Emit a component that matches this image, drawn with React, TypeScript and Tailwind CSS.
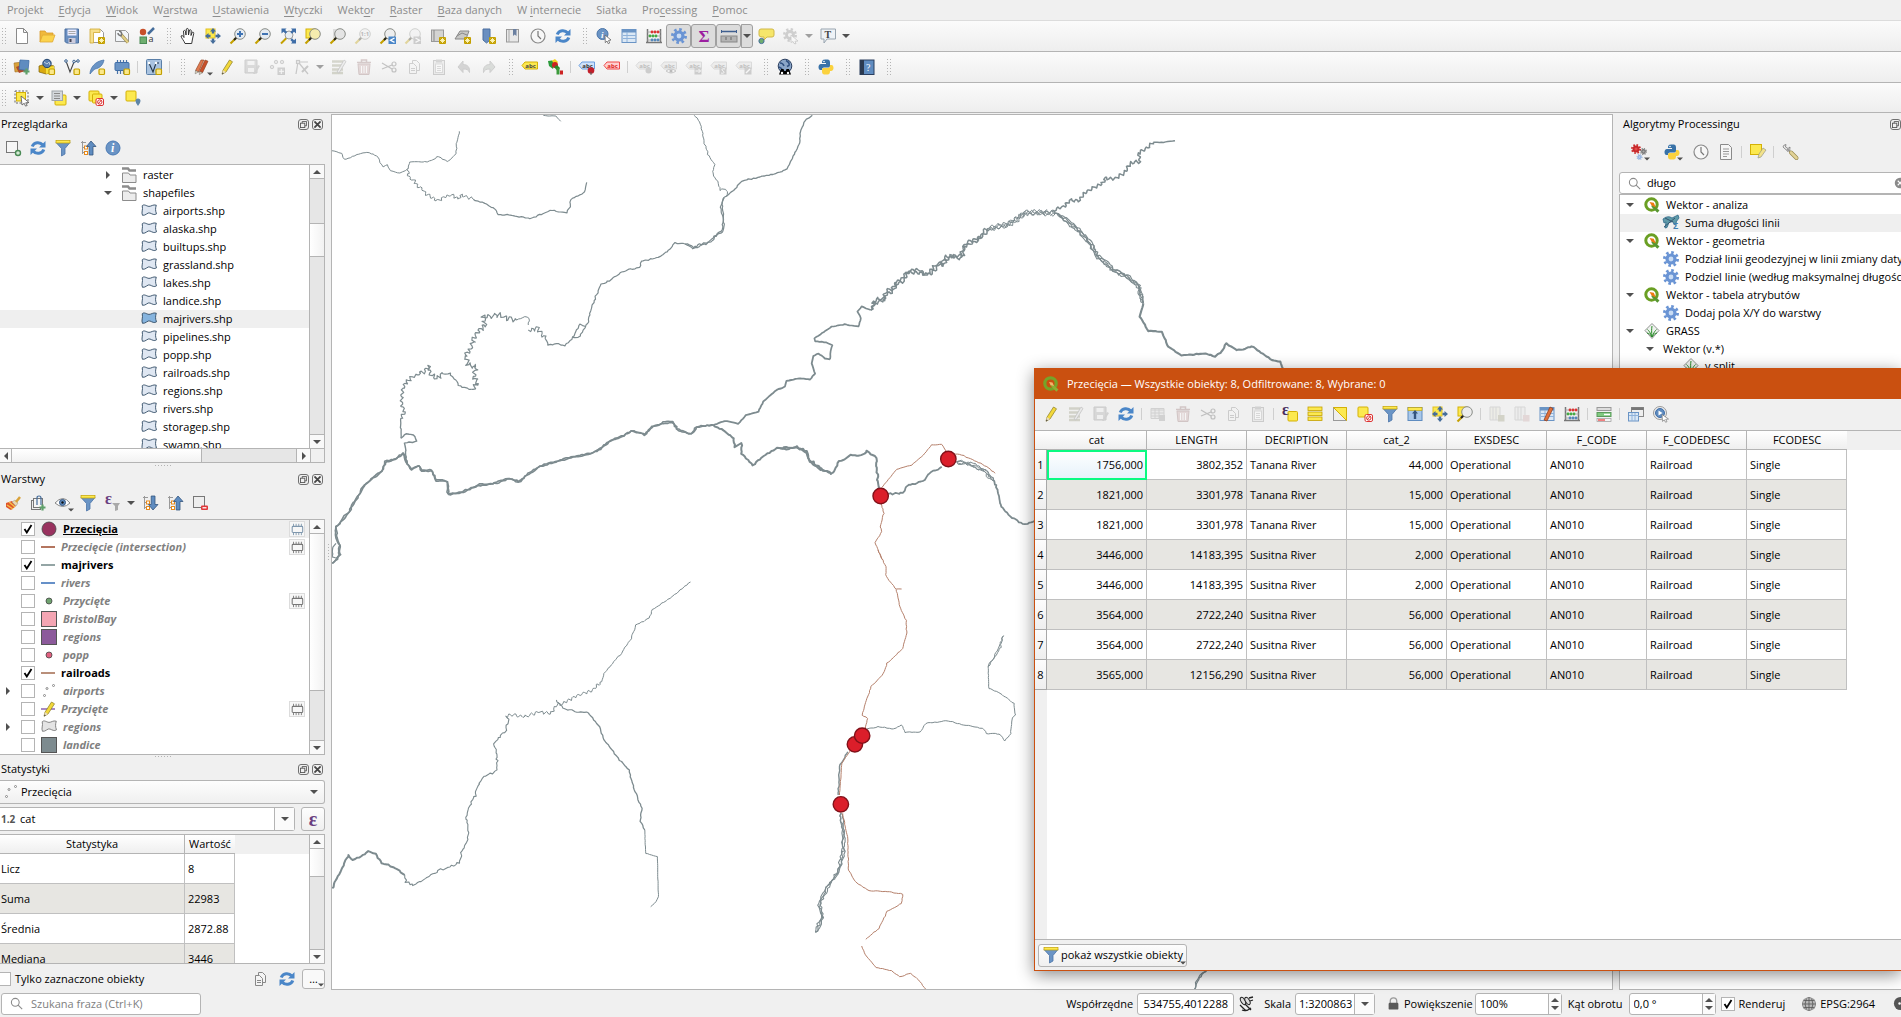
import type { ReactNode } from 'react';

/* ---------- icon drawings (16 x 16 box) ---------- */

const starBadge = (
  <g>
    <rect x="9" y="9" width="7" height="7" rx="1" fill="#c4a000" />
    <path d="M12.5 10v5M10 12.5h5M10.8 10.8l3.4 3.4M14.2 10.8l-3.4 3.4" stroke="#fff8c0" strokeWidth="0.9" />
  </g>
);
const squareBadge = <rect x="10" y="10" width="5.5" height="5.5" rx="1" fill="#fbe88a" stroke="#c4a000" strokeWidth="1.2" />;
const lens = (fill: string) => (
  <g>
    <path d="M.5 15.5l6-6" stroke="#c4a000" strokeWidth="2.2" />
    <path d="M4 12l3-3" stroke="#222" strokeWidth="2" />
    <circle cx="10" cy="6" r="5.300" fill={fill} stroke="#8a8d88" strokeWidth="1" />
  </g>
);
const refreshShape = (
  <g fill="none" stroke="#4a86c8" strokeWidth="3">
    <path d="M2.2 6.5C4 1.8 10 1.6 12.6 4.8" />
    <path d="M13.8 9.5C12 14.2 6 14.4 3.4 11.2" />
    <path d="M15.5 1v6.5H9z" fill="#4a86c8" stroke="none" />
    <path d="M.5 15V8.500H7z" fill="#4a86c8" stroke="none" />
  </g>
);
const gearShape = (x: number, y: number, r: number, fill: string, hub: string) => (
  <g>
    <circle cx={x} cy={y} r={r * 0.82} fill="none" stroke={fill} strokeWidth={r * 0.36} strokeDasharray={`${r * 0.32} ${r * 0.324}`} />
    <circle cx={x} cy={y} r={r * 0.5} fill={hub} stroke={fill} strokeWidth={r * 0.4} />
  </g>
);
const pencilShape = (fill: string) => (
  <g>
    <path d="M3 15.200l1-4L10.500 1l3 1.800L7 13z" fill={fill} stroke="#8a7a20" strokeWidth="0.7" />
    <path d="M3 15.200l1-4 3 1.800z" fill="#e9dcc0" />
    <path d="M3 15.400l.5-2 1.300.9z" fill="#333" />
  </g>
);
const arrowsShape = (c: string) => (
  <path d="M8 0l3 3.500H9.200v2H6.800v-2H5zM8 16l3-3.500H9.200v-2H6.800v2H5zM0 8l3.500-3v1.800h2v2.400h-2V11zM16 8l-3.500-3v1.800h-2v2.400h2V11z" fill={c} />
);
const tag = (fill: string, stroke: string, color: string) => (
  <g>
    <path d="M0 6.500l3-3.500h12.500v7H3z" fill={fill} stroke={stroke} />
    <text x="3.300" y="8.800" fontSize="6" fontWeight="700" fill={color} fontFamily="Open Sans, sans-serif">abc</text>
  </g>
);
const yellowSquare = <rect x="1" y="1" width="10" height="10" rx="1" fill="#fce94f" stroke="#d4b106" />;
const treeShape = (
  <g>
    <path d="M2.500 1v13M1 2.500h5M2.500 7.500h3M2.500 12.500h3" stroke="#999" fill="none" />
    <rect x="4.500" y="6" width="3" height="3" fill="#fff" stroke="#e88a1a" />
    <rect x="4.500" y="11.500" width="3" height="3" fill="#fff" stroke="#e88a1a" />
  </g>
);
const tableShape = (
  <g>
    <rect x="1" y="1.500" width="14" height="13" fill="#dbe8f5" stroke="#6a94c5" />
    <rect x="1" y="1.500" width="14" height="3" fill="#6a94c5" />
    <path d="M6 4v10M2 7.500h13M2 10.500h13" stroke="#8fb2da" />
  </g>
);
const copyShape = (
  <g fill="#f4f4f4" stroke="#888">
    <path d="M6.500 1.500h4l3 3v7h-7z" />
    <path d="M3.500 4.500h4l3 3v7h-7z" />
    <path d="M5 9.500h4M5 11.500h4" />
  </g>
);
const abacus = (
  <g>
    <path d="M1.500 1v14M14.500 1v14M0 14.500h16" stroke="#777" strokeWidth="1.500" />
    <path d="M1 4h14M1 8h14M1 12h14" stroke="#999" strokeWidth="0.8" />
    <g fill="#d33">{[6, 9, 12].map((x) => <circle key={x} cx={x} cy="4" r="1.400" />)}</g>
    <g fill="#4a4">{[4, 7, 10].map((x) => <circle key={x} cx={x} cy="8" r="1.400" />)}</g>
    <g fill="#58b">{[6, 9, 12].map((x) => <circle key={x} cx={x} cy="12" r="1.400" />)}</g>
  </g>
);
const forbidden = (
  <g>
    <rect x="8" y="8.500" width="7.500" height="7" rx="1.500" fill="#fff" stroke="#d33" />
    <circle cx="11.800" cy="12" r="2.200" fill="none" stroke="#d33" />
    <path d="M10 14l3.500-4" stroke="#d33" />
  </g>
);
const grassShape = (
  <g>
    <path d="M8 .500l7 7-7 8-7-8z" fill="#eef2ee" stroke="#777" strokeWidth="0.8" />
    <path d="M8 14C7.500 9 7.500 6 8 3M8 14C6 9 5 8 3.500 6.500M8 14c2-5 3-6 4.500-7.500M8 14C6 11 5 10.500 3 10M8 14c2-3 3-3.500 5-4" stroke="#2a8a2a" fill="none" />
  </g>
);
const qgisShape = (
  <g>
    <circle cx="7.500" cy="7.500" r="5.700" fill="#fff" stroke="#6a9f23" strokeWidth="3" />
    <path d="M8 6.500l1.800-.3L9.600 8l5.900 5.500-2.200 2.300L7.500 9.800z" fill="#589632" />
    <path d="M5.500 5l4.300.8 2 4.600-4.200-1.800z" fill="#ee7913" />
  </g>
);
const titleLogo = (
  <g>
    <circle cx="7.500" cy="7.500" r="5.700" fill="none" stroke="#76a32a" strokeWidth="3.200" />
    <path d="M8 7l7.500 6.500-2.200 2.300L7 9z" fill="#8fae35" />
    <path d="M6 6l3.500.5 1.500 3.600-3.500-1z" fill="#f6b26b" />
  </g>
);
const polyShape = (fill: string, stroke: string) => (
  <path d="M1.200 2.800C3 .600 5.500 3.200 8 3.400 10.500 3.400 12 1.200 15.300 2.200 14.400 5 14.200 7.500 15.500 10.800c-2.300 1.600-4.200.2-6.500-.8C6.500 9 5 12.800 1.500 12.300 0 9.500 2.300 6.500 1.200 2.800z" fill={fill} stroke={stroke} strokeWidth="0.9" />
);

const glyphs: Record<string, ReactNode> = {
  newFile: <path d="M2.500.500h7l4 4v11h-11zM9.500.500v4h4" fill="#fff" stroke="#8a8a8a" />,
  open: <g><path d="M1 14V3h5l1.500 2H14v3" fill="#f0b93c" stroke="#d9992a" strokeWidth="0.8" /><path d="M3.500 7H16l-2.500 7H1z" fill="#fbd34e" stroke="#e0a832" strokeWidth="0.8" /></g>,
  save: <g><path d="M1 1h13.500v14H2.500L1 13.500z" fill="#6a8fc0" stroke="#4a6f9f" /><rect x="3.500" y="1.500" width="9" height="6" fill="#eef" /><path d="M4.500 3.500h7M4.500 5.500h7" stroke="#aaa" /><rect x="4.500" y="10" width="7" height="5" fill="#ccd" /><rect x="5.500" y="11" width="2" height="3" fill="#445" /></g>,
  layoutNew: <g><path d="M1.500 1.500h10l3 3v10h-13z" fill="#fff" stroke="#999" /><path d="M1 1h10v3.500H4.500V15H1z" fill="#f6df8a" stroke="#d0a830" strokeWidth="0.8" />{starBadge}</g>,
  layoutMgr: <g><path d="M1.500 2.500h10l3 3v8h-13z" fill="#f2f5f8" stroke="#999" /><path d="M7 6.500l7 8" stroke="#8a7a40" strokeWidth="3.200" /><path d="M7 6.500l7 8" stroke="#e2cf86" strokeWidth="2" /><path d="M4 5c0 2 2 3 4 2.500M5 3c2 0 3 2 2.500 4" stroke="#777" fill="none" strokeWidth="1.500" /></g>,
  styles: <g><circle cx="4" cy="4" r="3.200" fill="#c8502a" /><path d="M9 6l6-6" stroke="#456d9b" strokeWidth="2.500" /><rect x="1" y="9" width="6.500" height="6.500" fill="#6fae6f" stroke="#4a8a55" /><text x="9.500" y="14" fontSize="9" fill="#333" fontFamily="Open Sans, sans-serif">a</text></g>,
  pan: <path d="M5 15.500c-1-3-3.500-5-4-7.500 1.200-1 2.200 0 3 1.500L3.500 3c1-1 1.800-.5 2 .5L6 7l.3-6c.8-.9 1.900-.6 2 .3L8.500 7l1-5c1-.8 1.800 0 1.700 1L11 7.500l1.200-3.200c1-.5 1.700.2 1.500 1.200L12.500 11l-.8 4.500z" fill="#fff" stroke="#222" strokeWidth="0.9" />,
  panSel: <g><rect x="1" y="1" width="9" height="9" fill="#fce94f" stroke="#e0c020" />{arrowsShape('#456d9b')}</g>,
  zoomIn: <g>{lens('#e4ebf2')}<path d="M10 3v6M7 6h6" stroke="#3f73b3" strokeWidth="2" /></g>,
  zoomOut: <g>{lens('#e4ebf2')}<path d="M7 6h6" stroke="#3f73b3" strokeWidth="2" /></g>,
  zoomFull: <g><path d="M1 15.500l6-6" stroke="#c4a000" strokeWidth="2" /><circle cx="9" cy="7" r="4" fill="#e8eef4" stroke="#999" /><path d="M1.500.500H6.500L5.200 2l2 2-1.700 1.700-2-2L1.500 5.500zM16 .500h-5L12.300 2l-2 2L12 5.700l2-2 2 1.800zM16 15.500h-5l1.300-1.500-2-2L12 10.300l2 2 2-1.800z" fill="#3f6ea8" /></g>,
  zoomSel: <g><rect x="1" y="1" width="9" height="9" fill="#fce94f" stroke="#d4b106" />{lens('#f6ecae')}</g>,
  zoomLayer: <g><rect x="3" y="1" width="8" height="9" fill="#ddd" />{lens('#e4e4e4')}</g>,
  tableZoom: <g><rect x="1" y="1" width="9" height="9" fill="#fce94f" stroke="#d4b106" />{lens('#ececec')}</g>,
  zoomNative: <g>{lens('#eee')}<text x="5.500" y="8.300" fontSize="6" fontWeight="700" fill="#444" fontFamily="Open Sans, sans-serif">1:1</text></g>,
  zoomLast: <g>{lens('#eee')}<rect x="8.500" y="8.500" width="7.500" height="7.500" fill="#4a86c8" /><path d="M14.500 10l-4 2.200 4 2.200" stroke="#fff" fill="none" strokeWidth="1.300" /></g>,
  zoomNext: <g>{lens('#eee')}<rect x="8.500" y="8.500" width="7.500" height="7.500" fill="#888" /><path d="M10.500 10l4 2.200-4 2.200" stroke="#fff" fill="none" strokeWidth="1.300" /></g>,
  mapNew: <g><rect x="1.500" y="2" width="12" height="11.500" fill="#d4d4d2" stroke="#999" /><path d="M4 2v11" stroke="#888" />{starBadge}</g>,
  map3d: <g><path d="M5 3h9l-3 8H0z" fill="#c8c8c6" stroke="#888" /><path d="M2 8l5-3 5 2" stroke="#888" fill="none" />{starBadge}</g>,
  bookmarkNew: <g><path d="M3 1h7v11l-3.500 3L3 12z" fill="#6a8fc0" stroke="#4a6f9f" />{starBadge}</g>,
  bookmarks: <g><rect x="1.500" y="1.500" width="12" height="12.500" fill="#e8e8e8" stroke="#999" /><path d="M4 2v12" stroke="#aaa" /><path d="M8 1h3.500v7L9.700 6.500 8 8z" fill="#6a7fa0" /></g>,
  clock: <g><circle cx="8" cy="8" r="7" fill="#f7f7f7" stroke="#8a8a8a" strokeWidth="1.200" /><path d="M8 3v5l3 3" fill="none" stroke="#777" strokeWidth="1.200" /></g>,
  refresh: refreshShape,
  identify: <g><circle cx="6.500" cy="6" r="5.500" fill="#6a94c5" stroke="#4a74a8" /><text x="5" y="9.500" fontSize="9" fontStyle="italic" fontWeight="700" fill="#fff" fontFamily="Liberation Serif, serif">i</text><path d="M9 7l6 5-2.500.5 1.200 2.500-1.500.7L11 13l-1.700 1.700z" fill="#fff" stroke="#666" strokeWidth="0.8" /></g>,
  table: tableShape,
  abacus,
  gear: gearShape(8, 8, 8, '#6a94d4', '#c9dcf4'),
  sigma: <text x="2.500" y="13.500" fontSize="17" fontWeight="700" fill="#9b1fa0" fontFamily="Liberation Serif, serif">Σ</text>,
  measure: <g><path d="M0 3.500h16" stroke="#3f5f8f" strokeWidth="1.500" /><path d="M.500 2v3M15.500 2v3" stroke="#3f5f8f" /><rect x="0" y="8" width="16" height="6" fill="#b4b4b4" stroke="#888" /><path d="M5 9v3M10 9v3" stroke="#666" /></g>,
  tip: <g><path d="M3 1h11q2 0 2 2v4q0 2-2 2H9l-3 3V9H4Q1 9 1 7V3q0-2 2-2z" fill="#f6e66a" stroke="#d0b848" /><circle cx="3.500" cy="13" r="2.600" fill="#6fae6f" stroke="#456d9b" /></g>,
  action: <g>{gearShape(7, 7, 7, '#888', '#eee')}<path d="M8 7l7 6-3 .3 1 2.500-2-.3-1-2-2 1z" fill="#fff" stroke="#777" strokeWidth="0.8" /></g>,
  textTip: <g><path d="M1 1h14.500v10H7l-3 4v-4H1z" fill="#eef2f6" stroke="#99a5b0" /><text x="4.500" y="9.500" fontSize="10" fontWeight="700" fill="#444" fontFamily="Liberation Serif, serif">T</text></g>,
  dataSource: <g><path d="M0 4l9-1 1 9-9 1z" fill="#d9a23a" stroke="#a06a20" strokeWidth="0.6" /><path d="M2 8l10-4 2 7-9 3z" fill="#b04a2a" /><path d="M6 1l9 .5-1 10-9-1z" fill="#5f8cc0" stroke="#3f6ea8" strokeWidth="0.8" /><path d="M12.500 9.500v6M9.500 12.500h6" stroke="#5fa06a" strokeWidth="2.200" /></g>,
  geopackage: <g><path d="M0 7l7-2 8 2v6l-8 2-7-2z" fill="#d9a910" stroke="#7a6008" strokeWidth="0.7" /><path d="M7 9v6l8-2V7z" fill="#f6de3a" /><circle cx="8" cy="4.500" r="4.200" fill="#5a7fb0" stroke="#23456f" /><path d="M5 3l3 2 2-2 1 3" stroke="#bcd" fill="none" />{squareBadge}</g>,
  vectorNew: <g><path d="M2 2l4 11L10 3l4-1" fill="none" stroke="#444" strokeWidth="1.100" /><circle cx="2" cy="2" r="1.300" fill="#ddd" stroke="#456d9b" /><circle cx="10" cy="2.500" r="1.300" fill="#ddd" stroke="#456d9b" /><circle cx="14" cy="2" r="1.300" fill="#ddd" stroke="#456d9b" />{squareBadge}</g>,
  feather: <g><path d="M1 15c0-6 5-13 14-14-1 5-4 8-9 9-2 1-3 3-5 5z" fill="#6a94c5" stroke="#3f6ea8" strokeWidth="0.7" />{squareBadge}</g>,
  chipBlue: <g><path d="M3.500 1v14M6.500 1v14M9.500 1v14M12.500 1v14" stroke="#4a74a8" strokeWidth="1.200" /><rect x="1" y="3.500" width="14" height="8" rx="1" fill="#6a94c5" stroke="#3f6ea8" />{squareBadge}</g>,
  virtual: <g><rect x="0.500" y="0.500" width="15" height="15" rx="1" fill="#a9c3e0" stroke="#5a7fa8" /><path d="M3 4l4 9 3-9h3" fill="none" stroke="#234" strokeWidth="1.100" /><circle cx="3" cy="4" r="1.200" fill="#fff" /><circle cx="10" cy="4" r="1.200" fill="#fff" />{squareBadge}</g>,
  pencils: <g><path d="M1.500 11.500L7 1h2.800L4.500 13z" fill="#e07a50" stroke="#8a3a1a" strokeWidth="0.600" /><path d="M5.500 12.500L11 1l3 1.200-5.500 11.500z" fill="#c8502a" stroke="#8a3a1a" strokeWidth="0.600" /><path d="M1.500 11.500l-.3 3.300L4.500 13zM5.500 12.500l-.2 3.200 3.200-2z" fill="#e9dcc0" stroke="#666" strokeWidth="0.500" /></g>,
  pencil: pencilShape('#f2d83a'),
  saveEdit: <g><path d="M1 1h12v13H1z" fill="#aaa" stroke="#888" /><rect x="3.500" y="2" width="7" height="4" fill="#eee" /><rect x="4" y="9" width="6" height="4" fill="#eee" /><path d="M9 15l5-9 2 1-5 8z" fill="#999" /></g>,
  addPoint: <g fill="#ccc" stroke="#888"><circle cx="3" cy="8" r="1.700" /><circle cx="7" cy="3" r="1.700" /><circle cx="13" cy="3" r="1.700" /><rect x="9" y="9" width="6.500" height="6.500" fill="#999" /><path d="M12.300 10v5M10 12.300h5" stroke="#fff" /></g>,
  vertex: <g fill="none" stroke="#777" strokeWidth="1.200"><path d="M2 15L4 3h10M5 4l9 11" /><rect x="2.500" y="1.500" width="3" height="3" fill="#ddd" /><path d="M8 13l6-6" strokeWidth="2" /></g>,
  multiEdit: <g><path d="M1 2.500h11M1 6.500h11M1 10.500h11M1 14h11" stroke="#999a80" strokeWidth="2.600" /><path d="M6 13L13 1l2 1.500L8 14z" fill="#ddd" stroke="#666" strokeWidth="0.7" /></g>,
  trash: <g><path d="M2 5h12l-1 10.500H3z" fill="#c9a9a9" stroke="#977" /><path d="M1 3.500h14M5.500 3V1h5v2" stroke="#977" fill="none" strokeWidth="1.500" /><path d="M5.500 7v7M8 7v7M10.500 7v7" stroke="#fff" /></g>,
  cut: <g fill="none" stroke="#666" strokeWidth="1.200"><path d="M1 4l10 6M1 10l10-4" /><circle cx="13" cy="11" r="2" /><circle cx="13" cy="5" r="2" /></g>,
  copy: copyShape,
  paste: <g><rect x="2.500" y="1.500" width="11" height="14" fill="#ddd" stroke="#888" /><rect x="5" y="0.500" width="6" height="3" fill="#999" /><rect x="4.500" y="5" width="7" height="8.500" fill="#fff" stroke="#aaa" /><path d="M6 7.500h4M6 9.500h4M6 11.500h4" stroke="#aaa" /></g>,
  undo: <path d="M7 2v3.500c5 0 7 3 6.500 8-1-3-3-3.500-6.500-3.500v3.500L2 8z" fill="#999" stroke="#888" />,
  redo: <path d="M9 2v3.500C4 5.500 2 8.500 2.500 13.500c1-3 3-3.500 6.500-3.500v3.500L14 8z" fill="#a9b0a9" stroke="#888" />,
  abcYellow: tag('#fce94f', '#d4b106', '#444'),
  diagram: <g><path d="M3.500 2.500L8 0l3 3-2.500 3z" fill="#f4d21f" /><path d="M1 2l4-.5 2 4-1 4.500-4-3z" fill="#2a9a3a" /><circle cx="8" cy="6" r="3" fill="#c22" /><path d="M7 8l3-2 3 3-2.500 3z" fill="#2a8a2a" /><rect x="9.500" y="9" width="3" height="6.500" fill="#3a9a3a" /><rect x="13" y="11.500" width="3" height="4" fill="#c22" /></g>,
  abcBlue: <g>{tag('#cfe2fa', '#6a9ee0', '#333')}<circle cx="12" cy="11.500" r="3.300" fill="#c21f2a" /><path d="M12 13v3" stroke="#555" /></g>,
  abcRed: tag('#ffd0d0', '#f04a4a', '#d22'),
  abcPin: <g>{tag('#ddd', '#aaa', '#555')}<circle cx="12.500" cy="11.500" r="3" fill="#888" /></g>,
  abcEye: <g>{tag('#ddd', '#aaa', '#555')}<path d="M5 12q5-4 10 0-5 4-10 0z" fill="#eee" stroke="#777" /><circle cx="10" cy="12" r="1.500" fill="#555" /></g>,
  abcMove: <g>{tag('#ddd', '#aaa', '#555')}<rect x="8.500" y="8.500" width="7" height="7" fill="#888" /><path d="M9.500 12h5M12.500 10l2 2-2 2" stroke="#fff" fill="none" /></g>,
  abcRot: <g>{tag('#ddd', '#aaa', '#555')}<rect x="8.500" y="8.500" width="7" height="7" fill="#888" /><path d="M14 10c-3-1-4 1-2 2s1 3-2 2" stroke="#fff" fill="none" /></g>,
  abcEdit: <g>{tag('#ddd', '#aaa', '#555')}<rect x="8.500" y="8.500" width="7" height="7" fill="#888" /><path d="M10 14l4-4" stroke="#fff" strokeWidth="1.500" /></g>,
  metasearch: <g><circle cx="8" cy="7" r="6.800" fill="#8aa5c8" stroke="#2b3f5f" /><path d="M3 4q3 0 4 3M9 1.500q4 2 3 5l-2 1M2 8q3 1 4 4" stroke="#2f4f80" strokeWidth="1.500" fill="none" /><path d="M2 15.500l2-5.500h2.500l.8 2h1.400l.8-2H12l2 5.500z" fill="#000" /><circle cx="5" cy="14" r="1.200" fill="#fff" /><circle cx="11" cy="14" r="1.200" fill="#fff" /></g>,
  python: <g><path d="M4 4c0-3 1-3.500 4-3.500s4 .5 4 3V7c0 1-1 1.500-2 1.500H6C4.500 8.500 4 9.500 4 11H2.500C1 11 .5 9.500.5 8s.8-3 2.500-3h5V4z" fill="#3872a8" /><path d="M12 12c0 3-1 3.500-4 3.500S4 15 4 12.500V11c0-1.500.8-2 2-2h4c1.500 0 2-1 2-3h1.500c1.500 0 2 1.500 2 3s-.8 3-2.500 3z" fill="#fbd23e" /><circle cx="6" cy="2.500" r="0.800" fill="#fff" /></g>,
  help: <g><rect x="1" y="1" width="14" height="14.500" fill="#5f8cc0" stroke="#2b3f5f" /><rect x="1" y="1" width="4" height="14.500" fill="#2b3a50" /><text x="7" y="11.500" fontSize="10" fill="#fff" fontFamily="Liberation Serif, serif">?</text></g>,
  selectRect: <g><rect x="1" y="1" width="13" height="12" fill="none" stroke="#666" strokeDasharray="2 1.500" /><rect x="2.500" y="2.500" width="9" height="8.500" fill="#fce94f" stroke="#d4b106" /><path d="M7 6l8 6.500-3.300.3 1.500 2.700-1.700.6-1.300-2.800L8 15z" fill="#fff" stroke="#555" strokeWidth="0.8" /></g>,
  selectForm: <g><rect x="4" y="5" width="11" height="10" rx="1" fill="#fce94f" stroke="#d4b106" /><rect x="1" y="1" width="10.500" height="9.500" fill="#d5d9dd" stroke="#a0a5aa" /><path d="M3 3.500h6M3 6h6M3 8.500h6" stroke="#888" /></g>,
  deselect: <g>{yellowSquare}<rect x="4.500" y="4" width="9.500" height="9" rx="1" fill="#fce94f" stroke="#d4b106" />{forbidden}</g>,
  selectLoc: <g>{yellowSquare}<path d="M13 8.500a2.500 2.500 0 012.500 2.500q0 2-2.500 5-2.500-3-2.500-5A2.500 2.500 0 0113 8.500z" fill="#5f86a8" /></g>,
  addLayer: <g><rect x="1.500" y="1.500" width="11" height="11" fill="#f6f6f6" stroke="#777" /><circle cx="13" cy="13" r="2.500" fill="#d5ecd5" stroke="#4a8a55" strokeWidth="1.400" /></g>,
  filter: <g><path d="M1 2.500h14L10 8.500V14l-3.500 2V8.500z" fill="#6a94c5" stroke="#4a74a8" strokeWidth="0.8" /><rect x="1" y="0.500" width="14" height="2.500" fill="#fce94f" stroke="#c4a000" strokeWidth="0.7" /></g>,
  collapse: <g>{treeShape}<path d="M11 1l5 5.500h-3V15H9.200V6.500H6.500z" fill="#5f8cc0" stroke="#34557f" strokeWidth="0.8" /></g>,
  expand: <g>{treeShape}<path d="M11 15l5-5.500h-3V1H9.200v8.500H6.500z" fill="#5f8cc0" stroke="#34557f" strokeWidth="0.8" /></g>,
  info: <g><circle cx="8" cy="8" r="7" fill="#6a94c5" stroke="#4a7ab5" /><text x="6" y="12" fontSize="12" fontStyle="italic" fontWeight="700" fill="#fff" fontFamily="Liberation Serif, serif">i</text></g>,
  brush: <g><path d="M1 8l6-2 4 5-5 4q-2-1-5-3z" fill="#e0552a" /><path d="M2 10l6 4M4 7l6 5" stroke="#f4c04a" strokeWidth="1.500" /><path d="M7 7l3-2 3 3-2 3z" fill="#e8d8b0" stroke="#a98" strokeWidth="0.6" /><path d="M11 7l4-5" stroke="#d9a23a" strokeWidth="2.500" /></g>,
  addGroup: <g><rect x="1.500" y="5.500" width="9" height="9" fill="#eee" stroke="#777" /><rect x="3.500" y="3.500" width="9" height="9" fill="#f6f6f6" stroke="#777" /><path d="M7 10V3q0-2 2-2t2 2v7" fill="none" stroke="#456d9b" strokeWidth="1.200" /><path d="M12.500 9.500v6M9.500 12.500h6" stroke="#5fa06a" strokeWidth="2.200" /></g>,
  eye: <g><path d="M0 8q8-9 15 0-7 7-15 0z" fill="#fff" stroke="#888" /><circle cx="7.500" cy="7.500" r="3" fill="#5f8cc0" stroke="#34557f" /><circle cx="7.500" cy="7.500" r="1.200" fill="#111" /></g>,
  epsFilter: <g><text x="0" y="8.500" fontSize="16" fontWeight="700" fill="#6a4080" fontFamily="Liberation Serif, serif">ε</text><path d="M7 8h8l-2 3v4l-3 1v-5z" fill="#a9a9a9" /></g>,
  removeLayer: <g><rect x="1.500" y="1.500" width="11" height="11" fill="#eee" stroke="#777" /><rect x="9" y="10.500" width="7" height="4.500" rx="1" fill="#e0383a" /><path d="M10.500 12.800h4" stroke="#fff" strokeWidth="1.300" /></g>,
  newField: <g><path d="M1 2.500h13v10H1z" fill="#ddd" stroke="#999" /><path d="M1 4h13M1 7h13M1 10h13M5 3v9M9 3v9" stroke="#999" /><rect x="9" y="9" width="6" height="6" fill="#999" /></g>,
  epsSelect: <g><rect x="6" y="5.500" width="9.500" height="9.500" rx="1" fill="#fce94f" stroke="#d4b106" /><text x="0" y="9" fontSize="16" fontWeight="700" fill="#4a3060" fontFamily="Liberation Serif, serif">ε</text></g>,
  selectAll: <g fill="#fce94f" stroke="#c4a000" strokeWidth="0.8"><rect x="1" y="1" width="14" height="3.500" /><rect x="1" y="6" width="14" height="3.500" /><rect x="1" y="11" width="14" height="3.500" /></g>,
  invert: <g><rect x="1.500" y="1.500" width="13" height="13" fill="#eee" stroke="#999" /><path d="M1.500 1.500h13v13z" fill="#fce94f" stroke="#d4b106" /></g>,
  deselectOne: <g>{yellowSquare}{forbidden}</g>,
  moveTop: <g><rect x="1" y="1.500" width="14" height="13" fill="#a9c8ea" stroke="#5f8cc0" /><rect x="1" y="1.500" width="14" height="3" fill="#fce94f" stroke="#c4a000" strokeWidth="0.600" /><path d="M8 4l3 3.500H9.200V13H6.800V7.500H5z" fill="#34557f" /></g>,
  fieldNew: <g><path d="M1 1h10v13H1zM4 1v13M7 1v13" fill="#e5e5d5" stroke="#aaa" /><rect x="9" y="9" width="6.500" height="6.500" fill="#a0a080" /></g>,
  fieldDel: <g><path d="M1 1h10v13H1zM4 1v13M7 1v13" fill="#e5e5e5" stroke="#aaa" /><rect x="9" y="9" width="6.500" height="6.500" fill="#caa" /></g>,
  fieldCalc: <g>{tableShape}<path d="M5 14L11 1l3 1.500L8 15z" fill="#e0703a" stroke="#8a3a1a" strokeWidth="0.7" /></g>,
  conditional: <g><rect x="1" y="1.500" width="14" height="3" fill="#ddd" stroke="#999" /><rect x="1" y="6.500" width="14" height="4" fill="#7fc97f" stroke="#5a9a5a" /><path d="M8 8.500h6" stroke="#fff" strokeWidth="1.500" /><rect x="1" y="12.500" width="14" height="3" fill="#f4f4f4" stroke="#999" strokeWidth="0.700" /><path d="M2 14h7" stroke="#e33" strokeWidth="1.200" /></g>,
  dock: <g><rect x="3.500" y="1.500" width="12" height="9" fill="#eee" stroke="#888" /><rect x="3.500" y="1.500" width="12" height="2.500" fill="#777" /><rect x="0.500" y="6.500" width="10" height="8.500" fill="#dbe8f5" stroke="#6a94c5" /><path d="M1 9.500h10M4 7v8M7 7v8" stroke="#8fb2da" /></g>,
  actionBlue: <g><circle cx="7" cy="7" r="6.500" fill="#eee" stroke="#999" /><circle cx="7" cy="7" r="4.500" fill="#5f8cc0" stroke="#3f6ea8" /><path d="M5.500 4.500l4 2.500-4 2.500z" fill="#fff" /><path d="M9 8.500l6.500 4.500-2.800.4 1.300 2.300-1.500.5-1.200-2.300-1.800 1.500z" fill="#fff" stroke="#777" strokeWidth="0.700" /></g>,
  gears: <g>{gearShape(5, 5, 5, '#c8282a', '#e04a4a')}{gearShape(12.500, 7.500, 3.500, '#777', '#aaa')}{gearShape(8.500, 13, 3, '#8fb0de', '#b9cff0')}</g>,
  doc: <g><path d="M2.500.500h8l3 3v12h-11z" fill="#f6f6f6" stroke="#8a8a8a" /><path d="M5 5h6M5 7.500h6M5 10h6M5 12.500h4" stroke="#999" /></g>,
  editInPlace: <g><rect x="0.500" y="0.500" width="11" height="10" fill="#fce94f" stroke="#d4b106" /><path d="M8 14l1-4 4-6 3 2-5 7z" fill="#f2e28a" stroke="#998" strokeWidth="0.7" /></g>,
  wrench: <g><path d="M1 3q0-2 3-2.500L3.500 3 6 4.500l2-1.500q.500 3-2 4.500z" fill="#eee" stroke="#777" strokeWidth="0.8" /><path d="M5 5l5 4" stroke="#999" strokeWidth="2" /><path d="M9 8.500l5.500 5.500" stroke="#998a50" strokeWidth="4" strokeLinecap="round" /><path d="M9 8.500l5.500 5.500" stroke="#e2d296" strokeWidth="2.600" strokeLinecap="round" /></g>,
  search: <g fill="none" stroke="#8a8a8a" strokeWidth="1.300"><circle cx="6.500" cy="6.500" r="4.800" /><path d="M10 10l5 5" /></g>,
  sumLines: <g><path d="M0 4q5-4 9-1l6-3 1 3-3 4 1 2-3 .5-1-3-4 1-2 5-2 .5 1-6-2 1z" fill="#5f9aa8" stroke="#2f6a8a" strokeWidth="0.800" /><path d="M1 12L12 3M2 3l8 4" stroke="#33556f" /><text x="10" y="14" fontSize="9" fontWeight="700" fill="#3f7fb0" fontFamily="Open Sans, sans-serif">Σ</text></g>,
  qgis: qgisShape,
  titleLogo,
  grass: grassShape,
  poly: polyShape('#dfe7f2', '#2f4a63'),
  polyActive: polyShape('#86b4de', '#2f4a63'),
  polyGrey: polyShape('#e4e4e4', '#777'),
  folder: <g><path d="M1 1.500h6l1.500 2H15" fill="none" stroke="#8c8c8c" strokeWidth="2.500" /><path d="M1.500 6h6l1.500 2h6v7.500H1.500z" fill="#ececec" stroke="#8c8c8c" /></g>,
  dots: <g fill="#fff" stroke="#888"><circle cx="3.500" cy="12.500" r="1" /><circle cx="6" cy="5.500" r="1" /><circle cx="12.500" cy="2.500" r="1" /></g>,
  chip: <g fill="none" stroke="#777"><path d="M4 2v3M7 2v3M10 2v3M13 2v3M4 12v3M7 12v3M10 12v3M13 12v3" /><rect x="2.500" y="5" width="12" height="7" rx="1" strokeWidth="1.200" /></g>,
  chipCurrent: <g fill="none" stroke="#7f97ad"><path d="M4 2v3M7 2v3M10 2v3M13 2v3M4 12v3M7 12v3M10 12v3M13 12v3" /><rect x="2.500" y="5" width="12" height="7" rx="1" strokeWidth="1.200" /></g>,
  extents: <g><ellipse cx="5" cy="5" rx="2" ry="4" fill="#ddd" stroke="#222" transform="rotate(-30 5 5)" /><ellipse cx="9.500" cy="5" rx="2" ry="4" fill="#ddd" stroke="#222" transform="rotate(-30 9.500 5)" /><path d="M2 9l6 6M7 8l6 6M4 14q4 2 9-2M11 2l4-1M12 5l3-1" stroke="#222" strokeWidth="1.300" fill="none" /></g>,
  lock: <g><path d="M4 8V5q0-4 4-4t4 4v3" fill="none" stroke="#999" strokeWidth="1.600" /><rect x="2" y="7" width="12" height="8.500" rx="1.500" fill="#5a5a5a" /></g>,
  globe: <g fill="#b9b9b9" stroke="#555"><path d="M2 3l6-3 6 3 2 5-2 5-6 3-6-3-2-5z" stroke="#777" strokeWidth="0.8" /><path d="M0 8h16M8 0v16M2 4h12M2 12h12M5 2q-3 6 0 12M11 2q3 6 0 12" fill="none" strokeWidth="0.900" /></g>,
  bubble: <g><circle cx="8" cy="8" r="7" fill="#555" /><circle cx="7" cy="8" r="1.300" fill="#fff" /></g>,
  clear: <g><circle cx="8" cy="8" r="7" fill="#8a8a8a" /><path d="M5 5l6 6M11 5l-6 6" stroke="#fff" strokeWidth="1.500" /></g>,
};

function Icon({ name, faded = false }: { name: string; faded?: boolean }) {
  return (
    <svg viewBox="0 0 16 16" aria-hidden="true" className={faded ? 'size-4 shrink-0 overflow-visible opacity-35' : 'size-4 shrink-0 overflow-visible'}>
      {glyphs[name]}
    </svg>
  );
}

function Caret({ dir = 'down', faded = false }: { dir?: 'down' | 'up' | 'left' | 'right'; faded?: boolean }) {
  const d = { down: 'M0 2h8L4 6z', up: 'M0 6h8L4 2z', left: 'M6 0v8L2 4z', right: 'M2 0v8l4-4z' }[dir];
  return (
    <svg viewBox="0 0 8 8" aria-hidden="true" className="size-2 shrink-0">
      <path d={d} fill={faded ? '#a0a0a0' : '#505050'} />
    </svg>
  );
}

/* ---------- toolbars ---------- */

/* Entries: an icon name, "~name" for a disabled tool, "!name" for a pressed one,
   "^name" for a tool with a corner menu mark, "|" separator, ":" grip, "v" menu caret. */
function ToolItem({ item }: { item: string }) {
  if (item === '|') return <span className="flex w-[7px] shrink-0 justify-center"><span className="h-3 w-px bg-[#cfcfcf]" /></span>;
  if (item === ':')
    return (
      <svg className="h-[18px] w-4 shrink-0" aria-hidden="true">
        <path d="M8.500 1v17M11.500 1v17" stroke="#b4b4b4" strokeDasharray="1 2" />
      </svg>
    );
  if (item === 'v' || item === '~v')
    return <button aria-label="Menu" className="flex h-6 w-3 shrink-0 items-center justify-center"><Caret faded={item === '~v'} /></button>;
  if (item === '!v')
    return <button aria-label="Menu" className="flex h-6 w-3 shrink-0 items-center justify-center rounded-r-[3px] border border-[#a0a0a0] bg-[#dcdcdc]"><Caret /></button>;
  const flag = '~!^'.includes(item[0]) ? item[0] : '';
  const name = flag ? item.slice(1) : item;
  return (
    <button
      aria-label={name}
      className={
        flag === '!'
          ? 'flex h-6 w-[25px] shrink-0 items-center justify-center rounded-[3px] border border-[#a0a0a0] bg-[#dcdcdc]'
          : 'relative flex h-6 w-[25px] shrink-0 items-center justify-center'
      }
    >
      <Icon name={name} faded={flag === '~'} />
      {flag === '^' && (
        <svg viewBox="0 0 8 8" aria-hidden="true" className="absolute right-px bottom-[2px] size-[6px]"><path d="M0 2h8L4 6z" fill="#505050" /></svg>
      )}
    </button>
  );
}

function Tools({ items }: { items: string }) {
  return <>{items.split(' ').map((it, i) => <ToolItem key={i} item={it} />)}</>;
}

function ToolRow({ items, last = false }: { items: string; last?: boolean }) {
  return (
    <div
      className={
        last
          ? 'flex h-[30px] shrink-0 items-center border-b border-[#b4b4b4] bg-linear-to-b from-[#fbfbfb] to-[#eeeeee]'
          : 'flex h-[31px] shrink-0 items-center border-b border-[#b4b4b4] bg-linear-to-b from-[#fbfbfb] to-[#eeeeee]'
      }
    >
      <svg className="h-[18px] w-[9px] shrink-0" aria-hidden="true">
        <path d="M2.500 1v17M5.500 1v17" stroke="#b4b4b4" strokeDasharray="1 2" />
      </svg>
      <Tools items={items} />
    </div>
  );
}

const MENUS: [string, string, string][] = [
  ['Projekt', '', ''], ['', 'E', 'dycja'], ['', 'W', 'idok'], ['W', 'a', 'rstwa'], ['', 'U', 'stawienia'], ['', 'W', 'tyczki'],
  ['Wekt', 'o', 'r'], ['', 'R', 'aster'], ['', 'B', 'aza danych'], ['W ', 'i', 'nternecie'], ['Siatka', '', ''], ['Pro', 'c', 'essing'], ['', 'P', 'omoc'],
];

/* ---------- shared dock parts ---------- */

function DockTitle({ title }: { title: string }) {
  return (
    <div className="flex h-[22px] shrink-0 items-center gap-[3px] pr-[2px] pl-px">
      <h2 className="grow">{title}</h2>
      <button aria-label="Odepnij" className="flex size-[11px] items-center justify-center rounded-[3px] border border-[#707070]">
        <svg viewBox="0 0 8 8" className="size-[7px]" fill="none" stroke="#555"><rect x="0.500" y="2.500" width="5" height="5" /><path d="M2.500 2.500v-2h5v5h-2" /></svg>
      </button>
      <button aria-label="Zamknij" className="flex size-[11px] items-center justify-center rounded-[3px] border border-[#707070]">
        <svg viewBox="0 0 8 8" className="size-[7px]" stroke="#444" strokeWidth="2"><path d="M.500.500l7 7M7.500.500l-7 7" /></svg>
      </button>
    </div>
  );
}

function VScroll({ before, thumb, after }: { before: number; thumb: number; after: number }) {
  return (
    <div className="flex w-[15px] shrink-0 flex-col border-l border-[#b4b4b4] bg-[#e6e6e6]">
      <button aria-label="W górę" className="flex h-[14px] shrink-0 items-center justify-center border-b border-[#b4b4b4] bg-[#f9f9f9]"><Caret dir="up" /></button>
      <div className="basis-0" style={{ flexGrow: before }} />
      <div className={before ? 'basis-0 border-y border-[#b4b4b4] bg-linear-to-r from-white to-[#f2f2f2]' : 'basis-0 border-b border-[#b4b4b4] bg-linear-to-r from-white to-[#f2f2f2]'} style={{ flexGrow: thumb }} />
      <div className="basis-0" style={{ flexGrow: after }} />
      <button aria-label="W dół" className="flex h-[14px] shrink-0 items-center justify-center border-t border-[#b4b4b4] bg-[#f9f9f9]"><Caret /></button>
    </div>
  );
}

function CheckBox({ id, checked = false }: { id: string; checked?: boolean }) {
  return (
    <span className="grid size-[14px] shrink-0 place-items-center">
      <input id={id} aria-label={id} type="checkbox" defaultChecked={checked} className="peer col-start-1 row-start-1 size-[14px] appearance-none border border-[#b4b4b4] bg-white" />
      <svg viewBox="0 0 10 10" aria-hidden="true" className="pointer-events-none col-start-1 row-start-1 hidden size-[10px] peer-checked:block">
        <path d="M1.500 5l2.300 3.500L8.500 1" fill="none" stroke="#000" strokeWidth="1.800" />
      </svg>
    </span>
  );
}

function Splitter() {
  return (
    <svg className="mx-auto h-[3px] w-[18px] shrink-0" aria-hidden="true"><path d="M1 1.500h17" stroke="#b4b4b4" strokeDasharray="1 2" /></svg>
  );
}

/* ---------- browser ---------- */

const FILES = ['airports', 'alaska', 'builtups', 'grassland', 'lakes', 'landice', 'majrivers', 'pipelines', 'popp', 'railroads', 'regions', 'rivers', 'storagep', 'swamp'];

function BrowserPanel() {
  return (
    <section className="flex min-h-0 flex-[350_1_0] flex-col">
      <DockTitle title="Przeglądarka" />
      <div className="mb-1 flex h-[25px] shrink-0 items-center"><Tools items="addLayer refresh filter collapse info" /></div>
      <div className="flex min-h-0 grow flex-col border-y border-r border-[#b4b4b4]">
        <div className="flex min-h-0 grow">
          <ul className="min-h-0 grow overflow-hidden bg-white pt-px">
            <li className="flex h-[18px] items-center pl-[104px]"><Caret dir="right" /><span className="w-[9px]" /><Icon name="folder" /><span className="pl-[6px]">raster</span></li>
            <li className="flex h-[18px] items-center pl-[104px]"><Caret /><span className="w-[9px]" /><Icon name="folder" /><span className="pl-[6px]">shapefiles</span></li>
            {FILES.map((f) => (
              <li key={f} className={f === 'majrivers' ? 'flex h-[18px] items-center gap-[6px] bg-[#efefef] pl-[141px]' : 'flex h-[18px] items-center gap-[6px] pl-[141px]'}>
                <Icon name={f === 'majrivers' ? 'polyActive' : 'poly'} />
                <span>{f}.shp</span>
              </li>
            ))}
          </ul>
          <VScroll before={44} thumb={33} after={178} />
        </div>
        <div className="flex h-[14px] shrink-0 border-t border-[#b4b4b4] bg-[#e6e6e6]">
          <button aria-label="W lewo" className="flex w-3 items-center justify-center border-r border-[#b4b4b4] bg-[#f9f9f9]"><Caret dir="left" /></button>
          <div className="flex-[190_1_0] border-r border-[#b4b4b4] bg-linear-to-b from-white to-[#f2f2f2]" />
          <div className="flex-[94_1_0]" />
          <button aria-label="W prawo" className="flex w-[14px] items-center justify-center border-l border-[#b4b4b4] bg-[#f9f9f9]"><Caret dir="right" /></button>
          <div className="w-[14px] border-l border-[#b4b4b4] bg-[#f0f0f0]" />
        </div>
      </div>
    </section>
  );
}

/* ---------- layers ---------- */

const bar = (color: string, h = 2) => <svg viewBox="0 0 16 16" className="size-4 shrink-0"><path d="M0 8h14" stroke={color} strokeWidth={h} /></svg>;
const dot = (r: number, fill: string) => <svg viewBox="0 0 16 16" className="size-4 shrink-0"><circle cx="8" cy="8" r={r} fill={fill} stroke="#444" strokeWidth="0.8" /></svg>;
const swatch = (fill: string) => <svg viewBox="0 0 16 16" className="size-4 shrink-0"><rect x="0.500" y="0.500" width="15" height="15" fill={fill} stroke="#555" /></svg>;

interface Layer { name: string; symbol: ReactNode; on?: boolean; temp?: boolean; group?: boolean; current?: boolean; wide?: boolean }
const LAYERS: Layer[] = [
  { name: 'Przecięcia', symbol: dot(7, '#99325f'), on: true, temp: true, current: true, wide: true },
  { name: 'Przecięcie (intersection)', symbol: bar('#b4755f'), temp: true },
  { name: 'majrivers', symbol: bar('#94a5a5'), on: true },
  { name: 'rivers', symbol: bar('#6690c8') },
  { name: 'Przycięte', symbol: dot(3, '#6fa36f'), temp: true, wide: true },
  { name: 'BristolBay', symbol: swatch('#f4a5b3'), wide: true },
  { name: 'regions', symbol: swatch('#8c5a9b'), wide: true },
  { name: 'popp', symbol: dot(3, '#e0607f'), wide: true },
  { name: 'railroads', symbol: bar('#b98f7a'), on: true },
  { name: 'airports', symbol: <Icon name="dots" />, group: true, wide: true },
  { name: 'Przycięte', symbol: <svg viewBox="0 0 16 16" className="size-4 shrink-0"><path d="M0 8h14" stroke="#a88ac4" strokeWidth="2" />{pencilShape('#f2d83a')}</svg>, temp: true },
  { name: 'regions', symbol: <Icon name="polyGrey" />, group: true, wide: true },
  { name: 'landice', symbol: swatch('#7d8b8f'), wide: true },
];

function LayersPanel() {
  return (
    <section className="flex min-h-0 flex-[287_1_0] flex-col">
      <DockTitle title="Warstwy" />
      <div className="mb-1 flex h-[25px] shrink-0 items-center"><Tools items="brush addGroup ^eye filter epsFilter v expand collapse removeLayer" /></div>
      <div className="flex min-h-0 grow border-y border-r border-[#b4b4b4]">
        <ul className="min-h-0 grow overflow-hidden bg-white">
          {LAYERS.map((l, i) => (
            <li key={i} className={l.current ? 'flex h-[18px] items-center bg-[#efefef] pr-1 pl-1' : 'flex h-[18px] items-center pr-1 pl-1'}>
              <span className="flex w-[17px] shrink-0">{l.group && <Caret dir="right" />}</span>
              <CheckBox id={`${l.name} ${i + 1}`} checked={l.on} />
              <span className="w-[6px] shrink-0" />
              {l.symbol}
              <span className={l.wide ? 'w-[6px] shrink-0' : 'w-1 shrink-0'} />
              <span className={l.current ? 'grow font-bold underline' : l.on ? 'grow font-bold' : 'grow font-bold text-[#808080] italic'}>{l.name}</span>
              {l.temp && (
                <span className="flex size-4 shrink-0 items-center justify-center border border-[#dcdcdc] bg-[#f7f7f7]">
                  <svg viewBox="0 0 16 16" className="size-[14px] shrink-0">{l.current ? glyphs.chipCurrent : glyphs.chip}</svg>
                </span>
              )}
            </li>
          ))}
        </ul>
        <VScroll before={0} thumb={158} after={49} />
      </div>
    </section>
  );
}

/* ---------- statistics ---------- */

const STATS = [['Licz', '8'], ['Suma', '22983'], ['Średnia', '2872.88'], ['Mediana', '3446']];

function StatsPanel() {
  return (
    <section className="flex min-h-0 flex-[232_1_0] flex-col">
      <DockTitle title="Statystyki" />
      <div className="mb-[3px] flex h-6 shrink-0 items-center rounded-r-[3px] border border-l-0 border-[#b4b4b4] bg-linear-to-b from-[#fdfdfd] to-[#f0f0f0] pl-[3px]">
        <Icon name="dots" />
        <select aria-label="Warstwa" className="grow appearance-none bg-transparent pl-[2px] outline-none"><option>Przecięcia</option></select>
        <span className="flex w-[21px] justify-center"><Caret /></span>
      </div>
      <div className="mb-[3px] flex h-6 shrink-0 gap-[6px]">
        <div className="flex grow items-center rounded-r-[3px] border border-l-0 border-[#b4b4b4] bg-white">
          <span className="w-5 shrink-0 pl-px text-[10px] font-bold text-[#555]">1.2</span>
          <input aria-label="Pole" defaultValue="cat" className="min-w-0 grow outline-none" />
          <button aria-label="Lista pól" className="flex h-full w-5 items-center justify-center border-l border-[#b4b4b4] bg-[#fbfbfb]"><Caret /></button>
        </div>
        <button aria-label="Wyrażenie" className="flex w-6 items-center justify-center rounded-[3px] border border-[#b4b4b4] bg-linear-to-b from-[#fdfdfd] to-[#f0f0f0] font-['Liberation_Serif',serif] text-xl leading-5 font-bold text-[#6a4080]">ε</button>
      </div>
      <div className="flex min-h-0 grow border-y border-r border-[#b4b4b4]">
        <div className="min-h-0 grow overflow-hidden bg-linear-to-b from-[#f0f0f0] from-[19px] to-white to-[19px]">
          <table className="w-[235px] table-fixed border-separate border-spacing-0">
            <thead>
              <tr className="h-[19px] bg-linear-to-b from-white to-[#eeeeee]">
                <th className="w-[185px] border-r border-b border-[#b4b4b4] font-normal">Statystyka</th>
                <th className="border-b border-[#b4b4b4] font-normal">Wartość</th>
              </tr>
            </thead>
            <tbody>
              {STATS.map(([k, v]) => (
                <tr key={k} className="h-[30px] bg-white even:bg-[#e7e6e2]">
                  <td className="border-r border-b border-[#c0c0c0] pl-px">{k}</td>
                  <td className="border-r border-b border-[#c0c0c0] pl-[3px]">{v}</td>
                </tr>
              ))}
            </tbody>
          </table>
        </div>
        <VScroll before={0} thumb={27} after={73} />
      </div>
      <div className="flex h-[26px] shrink-0 items-center pt-1">
        <span className="-ml-[3px] flex"><CheckBox id="selected-only" /></span>
        <label htmlFor="selected-only" className="grow pl-1">Tylko zaznaczone obiekty</label>
        <button aria-label="Kopiuj" className="mr-[11px]"><Icon name="copy" /></button>
        <button aria-label="Odśwież" className="mr-[7px]"><Icon name="refresh" /></button>
        <button className="relative flex h-5 w-[23px] items-center justify-center rounded-[3px] border border-[#b4b4b4] bg-[#f9f9f9]">
          …
          <svg viewBox="0 0 8 8" aria-hidden="true" className="absolute right-0 bottom-0 size-[6px]"><path d="M0 2h8L4 6z" fill="#505050" /></svg>
        </button>
      </div>
    </section>
  );
}

/* ---------- map ---------- */

interface Line { pts: string; amp: number; w: number; strands?: number; rail?: boolean }
interface Tile { x: number; y: number; sx: number; sy: number; lines: Line[]; dots: [number, number][] }

const TILES: Tile[] = [
  {
    x: 330, y: 110, sx: 3, sy: 3, dots: [],
    lines: [
      { amp: 0.5, w: 1, pts: '5,122 20,126 35,130 42,148 60,143 80,134 110,127 130,133 145,142 150,158 160,170 172,165 182,182 210,189 225,183 235,175' },
      { amp: 0.7, w: 1, pts: '235,175 238,156 260,155 285,155 305,153 320,139 338,146 350,156 365,146 379,130 380,95 388,64' },
      { amp: 1.7, w: 1, pts: '235,175 235,200 252,212 262,228 278,237 285,250 300,258 322,273 345,259 365,254 385,266 395,255 430,268' },
      { amp: 0.6, w: 1.2, pts: '430,268 470,283 495,298 505,313 550,316 600,326 640,310 665,300 690,306 710,308 720,290 722,268 750,254 765,245 770,217' },
      { amp: 0.3, w: 1, pts: '640,16 660,18 678,18 692,34' },
      { amp: 0.8, w: 1, pts: '1093,16 1108,36 1118,70 1124,100 1138,145 1155,165 1148,190 1162,215 1170,240 1185,237 1192,245 1190,260' },
      { amp: 0.6, w: 1.3, pts: '1447,16 1425,32 1413,58 1407,105 1385,150 1370,175 1355,185 1310,197 1270,205 1235,213 1220,232 1195,253 1183,262' },
      { amp: 1, w: 1.2, strands: 2, pts: '1183,262 1175,290 1178,330 1180,358 1160,378 1140,395 1110,402 1090,414 1065,402' },
      { amp: 0.9, w: 1.2, pts: '1065,402 1035,400 1010,425 985,443 960,448 935,455 928,472 900,478 870,488 840,512 815,522 800,555 785,590 772,640 750,680 728,682' },
      { amp: 0.8, w: 1.2, pts: '768,650 750,642 735,665 728,682 705,707 680,700 655,705 645,685' },
      { amp: 2.4, w: 1.1, pts: '645,685 620,655 595,660' },
      { amp: 0.5, w: 1, pts: '595,645 598,625 585,620 560,630' },
      { amp: 2.6, w: 1.2, pts: '560,630 530,625 510,614 485,617 460,620 465,645 445,660 430,690 420,720 405,740 415,765 440,770 430,800 445,820 425,838' },
      { amp: 1, w: 1.2, pts: '425,838 390,830 375,810 360,792 340,792' },
      { amp: 2.4, w: 1.2, pts: '340,792 320,805 300,790 298,768 280,785 250,800 225,820' },
      { amp: 1.6, w: 1.2, pts: '225,820 215,850 215,890 225,905 212,925' },
      { amp: 0.5, w: 1.3, pts: '212,925 213,985' },
      { amp: 0.8, w: 1.4, pts: '213,985 230,970 255,978 260,994 225,1000 228,1040 232,1060' },
      { amp: 0.7, w: 1.6, strands: 2, pts: '7,1360 28,1335 30,1305 18,1275 18,1250 40,1225 60,1205 70,1180 85,1155 100,1130 130,1105 155,1082 165,1055 195,1050 220,1030 232,1060 245,1078 265,1068 275,1083 305,1080 320,1110 350,1115 355,1152 400,1145 450,1125 500,1117 540,1107 565,1115 600,1087 650,1062 710,1045 750,1040 800,1022 850,990 905,962 945,975 965,950 1000,938 1028,937 1040,958 1083,970 1100,952 1150,945' },
      { amp: 0.6, w: 2, pts: '1150,945 1185,965 1210,985 1215,1010 1235,1000 1235,1030 1268,1066 1300,1038 1340,1013 1370,1018 1400,1010 1430,1028 1440,1055 1470,1078 1500,1088' },
      { amp: 0.5, w: 1.2, pts: '18,1300 8,1312 7,1340 18,1345 30,1330' },
      { amp: 0.3, w: 1.8, pts: '1150,945 1185,933 1225,941 1248,915 1285,905 1300,875 1340,840 1365,830 1370,812 1410,805 1440,808 1455,790 1445,760 1450,738 1465,730 1485,745 1500,748' },
    ],
  },
  {
    x: 780, y: 110, sx: 3, sy: 3, dots: [[505, 1047], [302, 1158]],
    lines: [
      { amp: 0.3, w: 1.7, pts: '150,748 152,725 157,705 140,697 105,694 103,685 125,670 155,650 195,643 235,650 243,625 232,605 245,590 272,600' },
      { amp: 1.7, w: 1.5, strands: 2, pts: '272,600 280,575 300,570 315,572 320,550 340,535 345,515 370,510 385,490 420,482 440,490 460,480 475,465 490,468 495,445 515,435 545,440 560,405 585,390 620,360' },
      { amp: 1.6, w: 1, strands: 4, pts: '620,360 650,350 680,345 715,325 735,308 780,308 830,310' },
      { amp: 1.7, w: 1.5, pts: '820,300 850,290 870,272 900,270 912,250 940,232 968,220 975,205 1010,205 1035,185 1050,160 1080,155 1075,130 1100,115 1120,97' },
      { amp: 0.3, w: 1.4, pts: '1120,97 1150,97 1185,92' },
      { amp: 1.4, w: 1.1, strands: 4, pts: '830,310 860,330 900,365 930,400 955,440 1000,480 1040,500 1075,530 1090,580' },
      { amp: 0.5, w: 2.1, pts: '1090,580 1080,620 1105,662 1145,665 1165,710 1205,737 1275,730 1305,740 1325,725 1338,700 1370,720 1390,718 1415,708 1450,732 1475,750 1500,755 1508,775' },
      { amp: 1, w: 2, pts: '0,1015 50,1010 80,1025 88,1050 130,1080 158,1092 175,1055 200,1045 210,1035 235,1040 262,1022 288,1045 293,1100 297,1135' },
      { amp: 0.9, w: 1.8, pts: '325,1152 370,1150 378,1128 430,1112 450,1090 485,1070' },
      { amp: 1.3, w: 1, strands: 4, pts: '530,1055 570,1062 610,1080 640,1112' },
      { amp: 0.9, w: 1.8, pts: '640,1110 655,1145 660,1185 690,1218 730,1243 765,1232' },
      { amp: 0.2, w: 1, rail: true, pts: '305,1133 350,1078 395,1065 430,1035 455,1005 485,1003 500,1025' },
      { amp: 0.5, w: 1, rail: true, pts: '520,1030 545,1035 590,1055 620,1070 645,1090' },
      { amp: 0.5, w: 1, rail: true, pts: '303,1180 312,1210 300,1250 305,1265 285,1298 308,1350' },
    ],
  },
  {
    x: 330, y: 550, sx: 2.208, sy: 3, dots: [[1159, 583], [1175, 557], [1128, 763]],
    lines: [
      { amp: 0.8, w: 2, pts: '5,1015 20,975 30,945 42,915 50,930 85,905 100,910 115,940 140,950 165,975' },
      { amp: 1.2, w: 1.1, pts: '165,975 168,995 185,1007 210,988 240,962 285,938 290,910 305,870 302,800 310,760 322,735 325,710 340,680 370,660 368,620 362,580 388,540 395,510 388,498' },
      { amp: 1.7, w: 1, pts: '388,498 410,495 430,500 460,485 488,490 500,465 515,460 540,440 580,420 600,395' },
      { amp: 0.6, w: 1, pts: '600,395 605,370 640,315 665,265 675,225 705,205 712,180 750,145 796,96' },
      { amp: 1, w: 1.1, pts: '500,450 515,475 545,485 570,488' },
      { amp: 0.6, w: 1.3, pts: '570,488 595,530 605,570 640,630 660,660 672,720 688,775 685,815 695,840' },
      { amp: 0.2, w: 1, pts: '695,840 697,910 723,920 725,1040 720,1055 708,1070' },
      { amp: 0.8, w: 1, strands: 2, pts: '1487,257 1480,290 1465,320 1453,350' },
      { amp: 0.5, w: 1, pts: '1453,350 1455,415 1480,430 1510,460 1513,495 1505,510 1503,550 1490,572 1478,552 1450,550 1440,535 1400,525 1365,512 1315,520 1303,547 1270,547 1262,525 1245,537 1210,530 1185,537' },
      { amp: 0.6, w: 1.4, pts: '1143,605 1125,650 1122,735' },
      { amp: 1.2, w: 1.1, strands: 3, pts: '1128,790 1132,850 1135,900 1120,970 1095,1020 1080,1060 1088,1100 1072,1147' },
      { amp: 0.6, w: 1.2, strands: 2, pts: '1941,1255 1922,1278 1911,1299 1909,1318' },
      { amp: 0.4, w: 1, rail: true, pts: '1210,0 1227,50 1228,80 1250,118 1262,117' },
      { amp: 0.4, w: 1, rail: true, pts: '1250,118 1258,170 1272,210 1273,250 1265,295 1230,340 1222,370 1195,410 1180,470 1175,495 1187,505 1182,535' },
      { amp: 0.2, w: 1, rail: true, pts: '1158,583 1130,640 1125,735' },
      { amp: 0.4, w: 1, rail: true, pts: '1132,790 1143,860 1145,960 1160,995 1190,1022 1230,1025 1265,1032 1262,1060 1230,1085 1212,1135 1183,1168' },
      { amp: 0.4, w: 1, rail: true, pts: '1174,1188 1182,1215 1205,1252 1240,1262 1258,1280 1282,1270 1300,1290 1315,1317' },
    ],
  },
];

/* Subdivides a course into short steps: a small jitter roughens every line, wide
   amplitudes swing in tight bends, and parallel strands weave around each other. */
function meander(tile: Tile, line: Line, strand: number): string {
  const pts = line.pts.split(' ').map((p) => {
    const [px, py] = p.split(',').map(Number);
    return [tile.x + px / tile.sx, tile.y + py / tile.sy];
  });
  let seed = 17 + strand * 101 + pts.length * 7;
  const rnd = () => {
    seed = (seed * 16807) % 2147483647;
    return (seed / 2147483647) * 2 - 1;
  };
  const bends = line.amp >= 1.6;
  const jitter = bends ? line.amp * 0.35 : line.amp * 0.9;
  const weave = (line.strands ?? 1) > 1 ? line.amp * 1.1 : 0;
  const step = bends ? 1.2 : 2.2;
  const out: string[] = [];
  let d = 0;
  for (let i = 0; i < pts.length - 1; i++) {
    const [x0, y0] = pts[i];
    const [x1, y1] = pts[i + 1];
    const len = Math.hypot(x1 - x0, y1 - y0) || 1;
    const nx = -(y1 - y0) / len;
    const ny = (x1 - x0) / len;
    const steps = Math.max(1, Math.round(len / step));
    for (let s = 0; s < steps; s++) {
      const t = s / steps;
      const start = i === 0 && s === 0;
      const swing = start ? 0 : (bends ? Math.sin(d * 1.15 + strand * 2) * line.amp * 0.8 : 0) + weave * Math.sin(d * 0.17 + strand * 1.7);
      const j = start ? 0 : jitter;
      out.push(`${(x0 + (x1 - x0) * t + nx * swing + rnd() * j).toFixed(1)} ${(y0 + (y1 - y0) * t + ny * swing + rnd() * j).toFixed(1)}`);
      d += len / steps;
    }
  }
  const last = pts[pts.length - 1];
  out.push(`${last[0].toFixed(1)} ${last[1].toFixed(1)}`);
  return 'M' + out.join('L');
}

function MapCanvas() {
  return (
    <div className="mt-px min-w-0 grow border border-[#b4b4b4] bg-white">
      <svg viewBox="332 115 1280 874" preserveAspectRatio="xMinYMin slice" className="size-full" role="img" aria-label="Mapa">
        {TILES.map((tile, ti) => (
          <g key={ti} fill="none" strokeLinejoin="round">
            {tile.lines.map((line, li) =>
              Array.from({ length: line.strands ?? 1 }, (_, s) => (
                <path key={`${li}-${s}`} d={meander(tile, line, s)} stroke={line.rail ? '#b5806b' : '#7d8b8f'} strokeWidth={line.w} />
              )),
            )}
          </g>
        ))}
        {TILES.flatMap((tile) => tile.dots.map(([x, y]) => (
          <circle key={`${x}-${y}`} cx={tile.x + x / tile.sx} cy={tile.y + y / tile.sy} r="7.700" fill="#db1e2a" stroke="#801119" strokeWidth="1.400" />
        )))}
      </svg>
    </div>
  );
}

/* ---------- processing toolbox ---------- */

const ALGS: { text: string; icon?: string; level: 0 | 1 | 2 | 3; open?: boolean; active?: boolean }[] = [
  { text: 'Wektor - analiza', icon: 'qgis', level: 0, open: true },
  { text: 'Suma długości linii', icon: 'sumLines', level: 1, active: true },
  { text: 'Wektor - geometria', icon: 'qgis', level: 0, open: true },
  { text: 'Podział linii geodezyjnej w linii zmiany daty', icon: 'gear', level: 1 },
  { text: 'Podziel linie (według maksymalnej długości)', icon: 'gear', level: 1 },
  { text: 'Wektor - tabela atrybutów', icon: 'qgis', level: 0, open: true },
  { text: 'Dodaj pola X/Y do warstwy', icon: 'gear', level: 1 },
  { text: 'GRASS', icon: 'grass', level: 0, open: true },
  { text: 'Wektor (v.*)', level: 2, open: true },
  { text: 'v.split', icon: 'grass', level: 3 },
];
const INDENT = ['pl-[6px]', 'pl-[25px]', 'pl-[26px]', 'pl-[45px]'];

function ProcessingPanel() {
  return (
    <aside className="flex w-[282px] shrink-0 flex-col overflow-hidden">
      <div className="flex h-[22px] shrink-0 items-center pl-1">
        <h2 className="grow">Algorytmy Processingu</h2>
        <button aria-label="Odepnij" className="flex size-[11px] items-center justify-center rounded-[3px] border border-[#707070]">
          <svg viewBox="0 0 8 8" className="size-[7px]" fill="none" stroke="#555"><rect x="0.500" y="2.500" width="5" height="5" /><path d="M2.500 2.500v-2h5v5h-2" /></svg>
        </button>
      </div>
      <div className="flex h-[37px] shrink-0 items-center pb-1 pl-[7px]">
        <Tools items="^gears" /><span className="w-2" /><Tools items="^python" /><span className="w-1" /><Tools items="clock doc | editInPlace | wrench" />
      </div>
      <label className="-mr-1 flex h-[22px] shrink-0 items-center rounded-[3px] border border-[#b4b4b4] bg-white pl-2">
        <svg viewBox="0 0 16 16" className="size-[13px] shrink-0">{glyphs.search}</svg>
        <input aria-label="Szukaj" defaultValue="długo" className="min-w-0 grow pl-[6px] outline-none" />
        <svg viewBox="0 0 16 16" className="mr-[-2px] size-3 shrink-0">{glyphs.clear}</svg>
      </label>
      <ul className="min-h-0 grow overflow-hidden border border-r-0 border-[#b4b4b4] bg-white pt-px whitespace-nowrap">
        {ALGS.map((a) => (
          <li key={a.text} className={a.active ? 'bg-[#efefef]' : ''}>
            <div className={`flex items-center ${a.level > 1 ? 'h-[17px]' : 'h-[18px]'} ${INDENT[a.level]}`}>
              {a.open ? <Caret /> : <span className="w-2 shrink-0" />}
              {a.icon && <span className="flex pl-[10px]"><Icon name={a.icon} /></span>}
              <span className={a.icon ? 'pl-[6px]' : 'pl-[9px]'}>{a.text}</span>
            </div>
          </li>
        ))}
      </ul>
    </aside>
  );
}

/* ---------- attribute table window ---------- */

const COLUMNS = ['cat', 'LENGTH', 'DECRIPTION', 'cat_2', 'EXSDESC', 'F_CODE', 'F_CODEDESC', 'FCODESC'];
const ROWS = [
  ['1756,000', '3802,352', 'Tanana River', '44,000'],
  ['1821,000', '3301,978', 'Tanana River', '15,000'],
  ['1821,000', '3301,978', 'Tanana River', '15,000'],
  ['3446,000', '14183,395', 'Susitna River', '2,000'],
  ['3446,000', '14183,395', 'Susitna River', '2,000'],
  ['3564,000', '2722,240', 'Susitna River', '56,000'],
  ['3564,000', '2722,240', 'Susitna River', '56,000'],
  ['3565,000', '12156,290', 'Susitna River', '56,000'],
];
const NUMERIC = [0, 1, 3];

function AttributeWindow() {
  return (
    <section className="absolute top-[368px] right-0 bottom-[46px] left-[1034px] flex flex-col border border-r-0 border-[#ca5010] bg-[#f0f0f0] shadow-[0_4px_16px_rgba(0,0,0,0.45)]">
      <div className="flex h-[30px] shrink-0 items-center gap-2 bg-[#ca5010] pl-2 text-white">
        <Icon name="titleLogo" />
        <h2>Przecięcia — Wszystkie obiekty: 8, Odfiltrowane: 8, Wybrane: 0</h2>
      </div>
      <div className="flex h-[31px] shrink-0 items-center pb-px pl-[3px]">
        <Tools items="pencil ~multiEdit ~saveEdit refresh | ~newField ~trash ~cut ~copy ~paste | epsSelect selectAll invert deselectOne filter moveTop panSel tableZoom | ~fieldNew ~fieldDel fieldCalc abacus | conditional | dock actionBlue" />
      </div>
      <div className="min-h-0 grow overflow-hidden border-y border-[#b4b4b4] bg-linear-to-r from-[#f0f0f0] from-[12px] to-white to-[12px]">
        <div className="bg-linear-to-b from-[#f0f0f0] from-[19px] to-white to-[19px]">
          <table className="w-[812px] table-fixed border-separate border-spacing-0 bg-white">
            <thead>
              <tr className="h-[19px] bg-linear-to-b from-white to-[#eeeeee]">
                <th className="w-3 border-b border-[#a8a8a8]" aria-label="Nr" />
                {COLUMNS.map((c) => <th key={c} className="border-r border-b border-[#b4b4b4] font-normal last:border-r-0">{c}</th>)}
              </tr>
            </thead>
            <tbody>
              {ROWS.map((r, i) => (
                <tr key={i} className="h-[30px] bg-white even:bg-[#e7e6e2]">
                  <th className="border-r border-b border-[#a8a8a8] bg-linear-to-b from-[#fdfdfd] to-[#eeeeee] font-normal">{i + 1}</th>
                  {[...r, 'Operational', 'AN010', 'Railroad', 'Single'].map((v, c) => (
                    <td
                      key={c}
                      className={
                        i === 0 && c === 0
                          ? 'border-r border-b border-[#c0c0c0] bg-linear-to-b from-white to-[#e6f2fb] pr-[3px] text-right outline-2 -outline-offset-2 outline-[#0afa82]'
                          : NUMERIC.includes(c)
                            ? 'border-r border-b border-[#c0c0c0] pr-[3px] text-right'
                            : 'border-r border-b border-[#c0c0c0] pl-[3px]'
                      }
                    >
                      {v}
                    </td>
                  ))}
                </tr>
              ))}
            </tbody>
          </table>
        </div>
      </div>
      <div className="flex h-[30px] shrink-0 items-center pl-[3px]">
        <button className="relative flex h-[23px] w-[149px] items-center gap-[2px] rounded-[3px] border border-[#b4b4b4] bg-linear-to-b from-[#fdfdfd] to-[#f0f0f0] pl-1 whitespace-nowrap">
          <Icon name="filter" />
          <span>pokaż wszystkie obiekty</span>
          <svg viewBox="0 0 8 8" aria-hidden="true" className="absolute right-0 bottom-0 size-[6px]"><path d="M0 2h8L4 6z" fill="#505050" /></svg>
        </button>
      </div>
    </section>
  );
}

/* ---------- status bar ---------- */

function Spin({ id, value }: { id: string; value: string }) {
  return (
    <span className="flex h-[22px] w-[87px] shrink-0 items-center rounded-[3px] border border-[#b4b4b4] bg-white">
      <input id={id} defaultValue={value} className="min-w-0 grow pl-1 outline-none" />
      <span className="flex h-full w-[13px] shrink-0 flex-col items-center justify-center border-l border-[#b4b4b4] bg-[#fbfbfb]">
        <Caret dir="up" /><Caret />
      </span>
    </span>
  );
}

function StatusBar() {
  return (
    <footer className="flex h-[27px] shrink-0 items-center overflow-hidden whitespace-nowrap">
      <label className="ml-px flex h-[22px] w-[200px] items-center rounded-[3px] border border-[#b4b4b4] bg-white pl-2">
        <svg viewBox="0 0 16 16" className="size-[13px] shrink-0">{glyphs.search}</svg>
        <input aria-label="Szukana fraza" placeholder="Szukana fraza (Ctrl+K)" className="min-w-0 grow pl-2 outline-none placeholder:text-[#808080]" />
      </label>
      <span className="grow" />
      <label htmlFor="coords">Współrzędne</label>
      <input id="coords" defaultValue="534755,4012288" className="ml-1 h-[22px] w-[97px] rounded-[3px] border border-[#b4b4b4] bg-white text-center outline-none" />
      <button aria-label="Zasięg" className="ml-1"><Icon name="extents" /></button>
      <label htmlFor="scale" className="ml-[10px]">Skala</label>
      <span className="ml-1 flex h-[22px] w-20 items-center rounded-[3px] border border-[#b4b4b4] bg-white">
        <input id="scale" defaultValue="1:3200863" className="min-w-0 grow pl-[3px] outline-none" />
        <button aria-label="Lista skal" className="flex h-full w-5 shrink-0 items-center justify-center border-l border-[#b4b4b4] bg-[#fbfbfb]"><Caret /></button>
      </span>
      <button aria-label="Zablokuj skalę" className="ml-3"><svg viewBox="0 0 16 16" className="size-[13px]">{glyphs.lock}</svg></button>
      <label htmlFor="magnifier" className="mr-[2px] ml-1">Powiększenie</label>
      <Spin id="magnifier" value="100%" />
      <label htmlFor="rotation" className="mr-[6px] ml-[6px]">Kąt obrotu</label>
      <Spin id="rotation" value="0,0 °" />
      <span className="w-[5px] shrink-0" />
      <CheckBox id="render" checked />
      <label htmlFor="render" className="ml-1">Renderuj</label>
      <button className="ml-[17px] flex items-center gap-1"><svg viewBox="0 0 16 16" className="size-[14px]">{glyphs.globe}</svg>EPSG:2964</button>
      <button aria-label="Komunikaty" className="-mr-[7px] ml-[18px]"><svg viewBox="0 0 16 16" className="size-[15px]">{glyphs.bubble}</svg></button>
    </footer>
  );
}

export default function App() {
  return (
    <div className="relative flex h-screen w-full flex-col overflow-hidden bg-[#f0f0f0] font-['Open_Sans',sans-serif] text-[11px] leading-4 text-black">
      <nav className="flex h-[21px] shrink-0 items-center gap-[15px] border-b border-[#dcdcdc] pl-[7px] text-[#8c8c8c]">
        {MENUS.map(([a, b, c]) => (
          <button key={a + b + c}>{a}<span className="underline underline-offset-2">{b}</span>{c}</button>
        ))}
      </nav>
      <ToolRow items="newFile open save layoutNew layoutMgr styles : pan panSel zoomIn zoomOut zoomFull zoomSel zoomLayer ~zoomNative zoomLast ~zoomNext mapNew map3d bookmarkNew bookmarks clock refresh : identify table abacus !gear !sigma !measure !v tip ~action ~v textTip v" />
      <ToolRow items="dataSource geopackage vectorNew feather chipBlue | virtual | : ^pencils pencil ~saveEdit ~addPoint ~vertex ~v ~multiEdit ~trash ~cut ~copy ~paste ~undo ~redo : abcYellow diagram | abcBlue abcRed | ~abcPin ~abcEye ~abcMove ~abcRot ~abcEdit : metasearch : python : help :" />
      <ToolRow last items="selectRect v selectForm v deselect v selectLoc" />
      <main className="flex min-h-0 grow">
        <div className="flex w-[325px] shrink-0 flex-col">
          <BrowserPanel />
          <span className="h-px shrink-0" /><Splitter /><span className="h-px shrink-0" />
          <LayersPanel />
          <Splitter />
          <StatsPanel />
        </div>
        <svg className="my-auto h-[18px] w-[6px] shrink-0" aria-hidden="true"><path d="M3.500 1v17" stroke="#b4b4b4" strokeDasharray="1 2" /></svg>
        <MapCanvas />
        <span className="w-[6px] shrink-0" />
        <ProcessingPanel />
      </main>
      <StatusBar />
      <AttributeWindow />
    </div>
  );
}
